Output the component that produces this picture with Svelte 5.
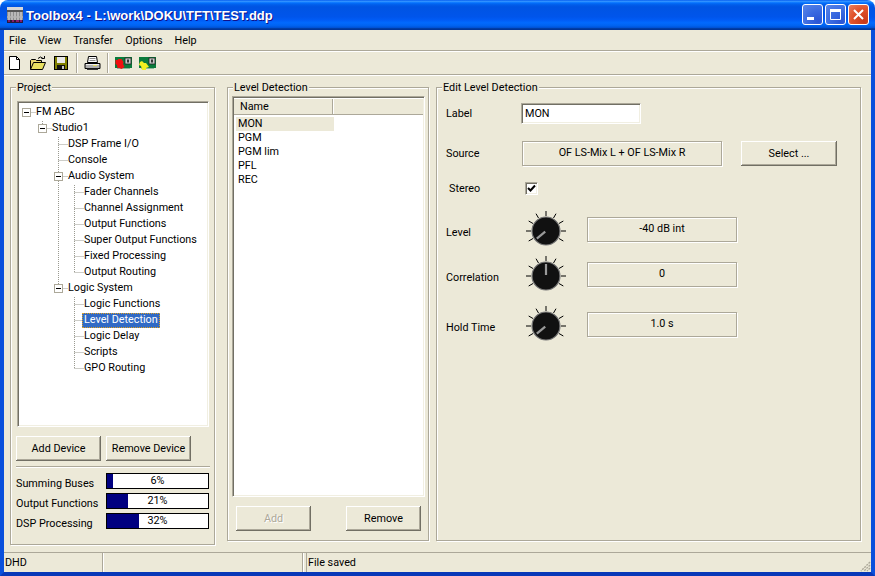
<script lang="ts">
    type Node = { label: string; level: number; open?: boolean; last?: boolean; selected?: boolean; through?: number[] };

    const menus = ["File", "View", "Transfer", "Options", "Help"];

    const treeRows: Node[] = [
        { label: "FM ABC", level: 0, open: true },
        { label: "Studio1", level: 1, open: true, last: true },
        { label: "DSP Frame I/O", level: 2 },
        { label: "Console", level: 2 },
        { label: "Audio System", level: 2, open: true },
        { label: "Fader Channels", level: 3, through: [58] },
        { label: "Channel Assignment", level: 3, through: [58] },
        { label: "Output Functions", level: 3, through: [58] },
        { label: "Super Output Functions", level: 3, through: [58] },
        { label: "Fixed Processing", level: 3, through: [58] },
        { label: "Output Routing", level: 3, last: true, through: [58] },
        { label: "Logic System", level: 2, open: true, last: true },
        { label: "Logic Functions", level: 3 },
        { label: "Level Detection", level: 3, selected: true },
        { label: "Logic Delay", level: 3 },
        { label: "Scripts", level: 3 },
        { label: "GPO Routing", level: 3, last: true },
    ];

    const usage = [
        { label: "Summing Buses", value: 6 },
        { label: "Output Functions", value: 21 },
        { label: "DSP Processing", value: 32 },
    ];

    const detections = ["MON", "PGM", "PGM lim", "PFL", "REC"];

    const knobs = [
        { label: "Level", value: "-40 dB int", angle: -130, gap: 22 },
        { label: "Correlation", value: "0", angle: 0, gap: 20 },
        { label: "Hold Time", value: "1.0 s", angle: -130, gap: 25 },
    ];

    const ticks = [-120, -90, -60, -30, 0, 30, 60, 90, 120];

    // tree x positions are relative to the tree's inner left edge (x = 19 on screen)
    function lineX(level: number) {
        return 26 + 16 * level - 19 + 0.5;
    }

    function polar(angle: number, r: number) {
        const a = ((angle - 90) * Math.PI) / 180;
        return { x: 20 + r * Math.cos(a), y: 20 + r * Math.sin(a) };
    }
</script>

<div class="window">
    <div class="titlebar">
        <svg class="appicon" width="16" height="16" viewBox="0 0 16 16">
            <rect width="16" height="16" fill="#8c8c8c" />
            <rect width="16" height="3" fill="#d8d8d8" />
            <rect y="3" width="16" height="2" fill="#555" />
            <path d="M2 5v8M5 5v8M8 5v8M11 5v8M14 5v8" stroke="#e4e4e4" stroke-width="1" />
            <rect y="9" width="16" height="2" fill="#b4b4b4" opacity="0.7" />
            <rect y="13" width="16" height="3" fill="#2a1a3a" />
            <path d="M1 14h2M5 14h2M9 14h3M13 14h2" stroke="#e020a0" stroke-width="1" />
        </svg>
        <span class="title">Toolbox4 - L:\work\DOKU\TFT\TEST.ddp</span>
        <div class="caption-buttons">
            <div class="caption">
                <svg width="19" height="19" viewBox="0 0 19 19"><rect x="4" y="12" width="7" height="3" fill="#fff" /></svg>
            </div>
            <div class="caption">
                <svg width="19" height="19" viewBox="0 0 19 19"><path d="M4.5 5.5h10v9h-10z" fill="none" stroke="#fff" /><rect x="4" y="4" width="11" height="3" fill="#fff" /></svg>
            </div>
            <div class="caption close">
                <svg width="19" height="19" viewBox="0 0 19 19"><path d="M5 5l9 9M14 5l-9 9" stroke="#fff" stroke-width="2" /></svg>
            </div>
        </div>
    </div>

    <div class="client">
        <nav class="menubar">
            {#each menus as menu}
                <span class="menu">{menu}</span>
            {/each}
        </nav>

        <div class="toolbar">
            <svg class="tool" width="16" height="16" viewBox="0 0 16 16">
                <path d="M2.5 1.500h7l3 3v10h-10z" fill="#fff" stroke="#000" />
                <path d="M9.500 1.500v3h3" fill="none" stroke="#000" />
            </svg>
            <svg class="tool" width="16" height="16" viewBox="0 0 16 16">
                <path d="M0.500 14.500v-9l1-1h4l1 1h5v2" fill="#e8d870" stroke="#000" />
                <path d="M0.500 14.500l3-7h12l-3 7z" fill="#e8e060" stroke="#000" />
                <path d="M8 3.500q2.500-3 5 0" fill="none" stroke="#000" />
                <path d="M11.500 3.500h3v-2.500" fill="none" stroke="#000" />
            </svg>
            <svg class="tool" width="16" height="16" viewBox="0 0 16 16">
                <rect x="1.500" y="1.500" width="13" height="13" fill="#808000" stroke="#000" />
                <rect x="4" y="2" width="8" height="6" fill="#e8e8e8" />
                <rect x="4" y="10" width="8" height="4" fill="#111" />
                <rect x="9" y="11" width="2" height="3" fill="#c8c8c8" />
            </svg>
            <div class="tool-sep"></div>
            <svg class="tool printer" width="17" height="16" viewBox="0 0 17 16">
                <path d="M4.500 1.500h8l1 6h-10z" fill="#fff" stroke="#000" />
                <path d="M5.500 3.500h6M5.500 5.500h6" stroke="#888" />
                <path d="M1 8.500h15v5h-15z" fill="#b0b0b0" stroke="#000" />
                <path d="M3 13.500h11v1.500h-11z" fill="#333" />
                <rect x="9" y="10" width="4" height="1" fill="#e8e060" />
                <path d="M2 9.500h13" stroke="#eee" />
            </svg>
            <div class="tool-sep"></div>
            <svg class="tool" width="17" height="16" viewBox="0 0 17 16">
                <rect y="2" width="17" height="11" fill="#0b7a3c" />
                <rect x="10" y="3" width="6" height="6" fill="#c8c8c8" stroke="#222" stroke-width="0.800" />
                <rect x="12" y="4.500" width="2" height="3" fill="#333" />
                <path d="M2 13.500h13" stroke="#8fb89a" />
                <path d="M0.500 5h2l1-1h3l2 3-0.500 2 1.500 3-3 2-2-1-2 0-0.500-3-1.500-1z" fill="#f01010" />
            </svg>
            <svg class="tool" width="17" height="16" viewBox="0 0 17 16">
                <rect y="2" width="17" height="11" fill="#0b7a3c" />
                <rect x="10" y="3" width="6" height="6" fill="#c8c8c8" stroke="#222" stroke-width="0.800" />
                <rect x="12" y="4.500" width="2" height="3" fill="#333" />
                <path d="M2 13.500h13" stroke="#8fb89a" />
                <path d="M1 7l2-1 2 2 2 0 3 4-3 1 0 2-4 0-1-4-2-1z" fill="#f4f020" />
            </svg>
        </div>

        <main class="panels">
            <section class="group project">
                <span class="legend">Project</span>

                <div class="tree sunken">
                    {#each treeRows as row}
                        <div class="tree-row">
                            <svg class="tree-lines" width={17 + 16 * row.level} height="16">
                                {#if row.through}
                                    {#each row.through as x}
                                        <path d="M{x - 19 + 0.500} 0v16" class="dots" />
                                    {/each}
                                {/if}
                                {#if row.level > 0}
                                    <path d="M{lineX(row.level)} 0V{row.last ? 8 : 16}" class="dots" />
                                {/if}
                                <path d="M{lineX(row.level)} 7.500h9" class="dots" />
                                {#if row.open}
                                    <rect x={lineX(row.level) - 4} y="3.500" width="8" height="8" fill="#fff" stroke="#aca899" />
                                    <path d="M{lineX(row.level) - 2.500} 7.500h5" stroke="#000" />
                                {/if}
                            </svg>
                            <span class="tree-label" class:selected={row.selected}>{row.label}</span>
                        </div>
                    {/each}
                </div>

                <div class="device-buttons">
                    <button class="btn device">Add Device</button>
                    <button class="btn device">Remove Device</button>
                </div>

                <div class="rule"></div>

                <div class="usage">
                    {#each usage as item}
                        <span class="usage-label">{item.label}</span>
                        <div class="bar">
                            <div class="bar-fill" style="width: {item.value}%"></div>
                            <span class="bar-text">{item.value}%</span>
                        </div>
                    {/each}
                </div>
            </section>

            <section class="group detection">
                <span class="legend">Level Detection</span>

                <div class="listview sunken">
                    <div class="list-header">
                        <div class="col first">Name</div>
                        <div class="col rest"></div>
                    </div>
                    <div class="list-body">
                        {#each detections as name, i}
                            <div class="list-row" class:current={i === 0}>{name}</div>
                        {/each}
                    </div>
                </div>

                <div class="list-buttons">
                    <button class="btn list-btn" disabled>Add</button>
                    <button class="btn list-btn">Remove</button>
                </div>
            </section>

            <section class="group edit">
                <span class="legend">Edit Level Detection</span>

                <div class="form-row label-row">
                    <span class="field-name">Label</span>
                    <div class="textbox sunken">MON</div>
                </div>

                <div class="form-row source-row">
                    <span class="field-name wide">Source</span>
                    <div class="readout source">OF LS-Mix L + OF LS-Mix R</div>
                    <button class="btn select">Select ...</button>
                </div>

                <div class="form-row stereo-row">
                    <span class="field-name">Stereo</span>
                    <div class="check sunken">
                        <svg width="9" height="9" viewBox="0 0 9 9"><path d="M1 4l2.500 2.500L8 1.500" fill="none" stroke="#000" stroke-width="2" /></svg>
                    </div>
                </div>

                {#each knobs as knob}
                    <div class="knob-row" style="margin-top: {knob.gap}px">
                        <span class="knob-name">{knob.label}</span>
                        <svg class="knob" width="40" height="40" viewBox="0 0 40 40">
                            {#each ticks as t}
                                <line x1={polar(t, 15).x} y1={polar(t, 15).y} x2={polar(t, 20).x} y2={polar(t, 20).y} stroke="#000" />
                            {/each}
                            <circle cx="20" cy="20" r="14" fill="#111" stroke="#777" stroke-width="1.200" />
                            <line x1={polar(knob.angle, 1).x} y1={polar(knob.angle, 1).y} x2={polar(knob.angle, 12).x} y2={polar(knob.angle, 12).y} stroke="#9a9a9a" stroke-width="2.200" />
                        </svg>
                        <div class="readout value">{knob.value}</div>
                    </div>
                {/each}
            </section>
        </main>

        <footer class="statusbar">
            <div class="pane first">DHD</div>
            <div class="pane second"></div>
            <div class="pane third">File saved</div>
            <svg class="grip" width="11" height="11" viewBox="0 0 11 11">
                <path d="M10 1L1 10M10 4L4 10M10 7L7 10" stroke="#aca899" stroke-width="1.400" stroke-dasharray="2 1" />
            </svg>
        </footer>
    </div>
</div>

<style>
    :global(body) {
        margin: 0;
        background: #fff;
    }

    .window {
        width: 875px;
        height: 576px;
        display: flex;
        flex-direction: column;
        font-family: Roboto, "Liberation Sans", Arial, sans-serif;
        font-size: 10.8px;
        color: #000;
        overflow: hidden;
    }

    .titlebar {
        height: 30px;
        flex: none;
        display: flex;
        align-items: center;
        padding: 0 7px;
        box-sizing: border-box;
        border-radius: 8px 8px 0 0;
        background: linear-gradient(to bottom, #0058ee 0%, #3593ff 4%, #288eff 6%, #127dff 8%, #036ffc 10%, #0262ee 14%, #0057e5 20%, #0054e3 24%, #0055eb 56%, #005bf5 66%, #026afe 76%, #0062ef 86%, #0052d6 92%, #0040ab 94%, #003092 100%);
    }

    .appicon {
        flex: none;
    }

    .title {
        margin-left: 3px;
        color: #fff;
        font-family: "Liberation Sans", Arial, sans-serif;
        font-size: 13px;
        font-weight: bold;
        text-shadow: 1px 1px #0f1089;
        white-space: nowrap;
    }

    .caption-buttons {
        margin-left: auto;
        margin-right: -1px;
        display: flex;
        gap: 2px;
        margin-top: -1px;
    }

    .caption {
        width: 21px;
        height: 21px;
        box-sizing: border-box;
        border: 1px solid #fff;
        border-radius: 3px;
        background: radial-gradient(circle at 80% 85%, #2b55d4 0%, #3a6ae0 45%, #5a86e8 100%);
    }

    .caption svg {
        display: block;
    }

    .close {
        background: radial-gradient(circle at 80% 85%, #c8391a 0%, #e0512a 55%, #ea8060 100%);
    }

    .client {
        flex: 1;
        min-height: 0;
        display: flex;
        flex-direction: column;
        background: #ece9d8;
        border: solid #0a50dc;
        border-width: 0 4px 4px;
        border-bottom-color: #0838b8;
    }

    .menubar {
        height: 20px;
        flex: none;
        box-sizing: border-box;
        display: flex;
        align-items: center;
        padding-left: 5px;
        gap: 12px;
    }

    .toolbar {
        height: 25px;
        flex: none;
        box-sizing: border-box;
        display: flex;
        align-items: center;
        padding-left: 3px;
        border-top: 1px solid #aca899;
        border-bottom: 1px solid #aca899;
        box-shadow: inset 0 1px 0 #fff, 0 1px 0 #fff;
    }

    .tool {
        flex: none;
        margin-right: 7px;
    }

    .printer {
        margin-right: 6px;
    }

    .tool-sep {
        width: 1px;
        height: 20px;
        margin-right: 7px;
        background: #aca899;
        box-shadow: 1px 0 0 #fff;
    }

    .panels {
        flex: 1;
        min-height: 0;
        display: flex;
        align-items: flex-start;
        gap: 7px;
        padding: 12px 0 0 6px;
    }

    .group {
        position: relative;
        box-sizing: border-box;
        flex: none;
        border: 1px solid #aca899;
        box-shadow: 1px 1px 0 #fff, inset 1px 1px 0 #fff;
    }

    .legend {
        position: absolute;
        top: -7px;
        left: 5px;
        padding: 0 1px;
        background: #ece9d8;
    }

    .project {
        width: 205px;
        height: 458px;
        margin-right: 5px;
        padding: 13px 5px 0;
    }

    .sunken {
        box-sizing: border-box;
        background: #fff;
        border: 1px solid;
        border-color: #aca899 #fff #fff #aca899;
        box-shadow: inset 1px 1px 0 #716f64, inset -1px -1px 0 #f1efe2;
    }

    .tree {
        width: 192px;
        height: 326px;
        margin-left: 1px;
        padding-top: 3px;
    }

    .tree-row {
        height: 16px;
        display: flex;
        align-items: flex-start;
        white-space: nowrap;
        padding-left: 1px;
    }

    .tree-lines {
        flex: none;
        display: block;
    }

    .dots {
        fill: none;
        stroke: #9a9a90;
        stroke-dasharray: 1 1;
    }

    .tree-label {
        height: 15px;
        line-height: 14px;
        padding: 0 2px;
        box-sizing: border-box;
        margin-left: -2px;
    }

    .tree-label.selected {
        background: #316ac5;
        color: #fff;
        outline: 1px dotted #e0a020;
        outline-offset: -1px;
    }

    .device-buttons {
        display: flex;
        gap: 5px;
        margin-top: 9px;
    }

    .btn {
        box-sizing: border-box;
        height: 25px;
        padding: 0;
        font: inherit;
        color: #000;
        background: #ece9d8;
        border: none;
        box-shadow: inset -1px -1px 0 #716f64, inset 1px 1px 0 #fff, inset -2px -2px 0 #aca899;
    }

    .btn:disabled {
        color: #aca899;
        text-shadow: 1px 1px #fff;
    }

    .device {
        width: 85px;
    }

    .rule {
        margin-top: 5px;
        width: 194px;
        height: 1px;
        background: #aca899;
        box-shadow: 0 1px 0 #fff;
    }

    .usage {
        margin-top: 6px;
        display: grid;
        grid-template-columns: 90px 103px;
        row-gap: 4px;
        align-items: center;
    }

    .usage-label {
        white-space: nowrap;
        position: relative;
        top: 2px;
    }

    .bar {
        position: relative;
        box-sizing: border-box;
        height: 16px;
        background: #fff;
        border: 1px solid #000;
        text-align: center;
        line-height: 13px;
    }

    .bar-fill {
        height: 100%;
        background: #000080;
    }

    .bar-text {
        position: absolute;
        inset: 0;
    }

    .detection {
        width: 202px;
        height: 454px;
        padding: 8px 3px 0 4px;
    }

    .listview {
        height: 401px;
        display: flex;
        flex-direction: column;
        padding: 2px 1px 0;
    }

    .list-header {
        height: 16px;
        flex: none;
        display: flex;
        border-bottom: 1px solid #aca899;
        background: #ece9d8;
        box-sizing: border-box;
    }

    .col {
        box-sizing: border-box;
        line-height: 16px;
    }

    .col.first {
        width: 99px;
        padding-left: 6px;
        border-right: 1px solid #aca899;
        box-shadow: 1px 0 0 #fff;
    }

    .col.rest {
        flex: 1;
    }

    .list-body {
        padding: 2px 0 0 2px;
    }

    .list-row {
        width: 98px;
        height: 14px;
        line-height: 14px;
        padding-left: 2px;
        box-sizing: border-box;
    }

    .list-row.current {
        background: #ece9d8;
    }

    .list-buttons {
        display: flex;
        justify-content: space-between;
        margin-top: 9px;
        padding: 0 4px;
    }

    .list-btn {
        width: 75px;
    }

    .edit {
        width: 425px;
        height: 454px;
        padding: 15px 9px 0;
    }

    .form-row {
        display: flex;
        align-items: center;
    }

    .label-row {
        height: 21px;
    }

    .field-name {
        width: 75px;
        flex: none;
    }

    .field-name.wide {
        width: 76px;
    }

    .textbox {
        width: 120px;
        height: 21px;
        line-height: 19px;
        padding-left: 3px;
    }

    .source-row {
        height: 25px;
        margin-top: 17px;
    }

    .readout {
        box-sizing: border-box;
        height: 25px;
        line-height: 22px;
        text-align: center;
        border: 1px solid #aca899;
        box-shadow: inset 1px 1px 0 #fff, 1px 1px 0 #fff;
    }

    .source {
        width: 200px;
    }

    .select {
        width: 96px;
        margin-left: 19px;
    }

    .stereo-row {
        height: 13px;
        margin-top: 16px;
        padding-left: 3px;
    }

    .stereo-row .field-name {
        width: 76px;
    }

    .check {
        width: 13px;
        height: 13px;
        display: flex;
        align-items: center;
        justify-content: center;
    }

    .knob-row {
        height: 25px;
        display: flex;
        align-items: flex-start;
    }

    .knob-name {
        width: 80px;
        flex: none;
        margin-top: 9px;
    }

    .knob {
        flex: none;
        margin-top: -6px;
    }

    .value {
        width: 150px;
        margin-left: 21px;
    }

    .statusbar {
        height: 20px;
        flex: none;
        margin-top: auto;
        display: flex;
        box-sizing: border-box;
        border-top: 1px solid #aca899;
        position: relative;
    }

    .pane {
        box-sizing: border-box;
        height: 100%;
        line-height: 20px;
        padding-left: 1px;
        border-right: 1px solid #aca899;
        box-shadow: 1px 0 0 #fff;
    }

    .pane.first {
        width: 99px;
        margin-right: 3px;
    }

    .pane.second {
        width: 197px;
        margin-right: 3px;
    }

    .pane.third {
        flex: 1;
        border-right: none;
        box-shadow: none;
        border-left: 1px solid #aca899;
    }

    .grip {
        position: absolute;
        right: 0;
        bottom: 0;
    }
</style>
